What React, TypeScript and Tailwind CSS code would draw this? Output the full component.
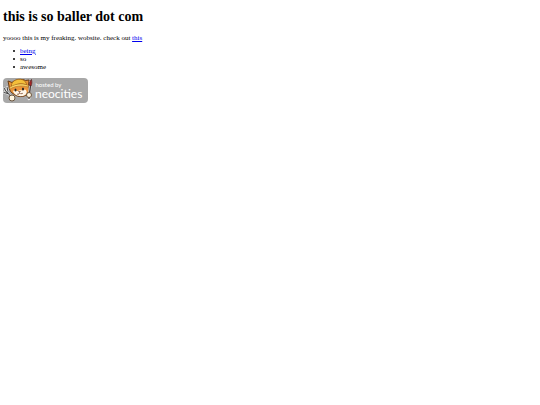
function NeocitiesBadge() {
  return (
    <svg viewBox="0 0 170 50" className="block w-[85px] h-[25px]" role="img" aria-label="hosted by neocities">
      <rect width="170" height="50" rx="8" fill="#a8a8a8" />

      {/* fork */}
      <path d="M2 20l5 8M8 18l2 9M2 29l7 2M9 29l8 10" stroke="#fff" strokeWidth="4" strokeLinecap="round" />
      <path d="M2 20l5 8M8 18l2 9M2 29l7 2M9 29l8 10" stroke="#444" strokeWidth="2.2" strokeLinecap="round" />

      {/* head */}
      <path
        d="M12 16l-2-10 8 3c6-6 20-8 27-4l7-1-1 11c2 7 1 13-3 18-6 5-18 6-25 0-7-3-11-9-11-17z"
        fill="#ea943a"
        stroke="#6b3d16"
        strokeWidth="2"
      />
      <path d="M20 26c5-3 8 2 12-1 4-2 8 1 12-2 5 2 4 9 0 11-8 5-21 2-24-8z" fill="#fff6e8" />
      {/* hard hat */}
      <path d="M17 13C20 4 30 1 38 3c6 2 9 6 9 11-10-4-20-3-30 5z" fill="#f4bf3a" stroke="#9a5f18" strokeWidth="1.5" />
      <path d="M12 20c9-8 26-11 39-5l-1 3c-13-4-26-2-36 4z" fill="#ffdb6b" stroke="#9a5f18" strokeWidth="1" />
      <ellipse cx="25" cy="24" rx="2" ry="3" fill="#242424" />
      <ellipse cx="40" cy="22" rx="2" ry="3" fill="#242424" />
      <path d="M31 27h4l-2 2zM28 32c3 2 4 0 5-2 2 2 5 2 7 0" fill="#713c21" stroke="#713c21" strokeWidth="1" />

      {/* brush */}
      <path d="M55 8l-3 34" stroke="#fff" strokeWidth="5" strokeLinecap="round" />
      <path d="M55 15l-3 26" stroke="#4a4040" strokeWidth="3" strokeLinecap="round" />
      <path d="M53 15c-1-5 1-10 4-12 1 5 1 9-1 13z" fill="#a82424" stroke="#522222" strokeWidth="1.5" />

      {/* paws */}
      <circle cx="18" cy="40" r="6" fill="#fff5df" stroke="#6a5540" strokeWidth="2" />
      <circle cx="52" cy="34" r="5" fill="#fff5df" stroke="#6a5540" strokeWidth="2" />

      <text x="65" y="18" fontSize="12" fill="#fff" className="font-['Lato',sans-serif]">
        hosted by
      </text>
      <text x="64" y="39" fontSize="24" fill="#fff" className="font-['Lato',sans-serif]">
        neocities
      </text>
    </svg>
  )
}

const bullet =
  "flex items-center before:content-[''] before:w-[2px] before:h-[2px] before:mr-[5px] before:rounded-full before:bg-black"

export default function App() {
  return (
    <main className="px-[3px] py-[9px] bg-white text-black text-[7px] leading-[8px] font-['Liberation_Serif',serif]">
      <h1 className="text-[14px] leading-[16px] font-bold">this is so baller dot com</h1>
      <p className="mt-[9px]">
        yoooo this is my freaking. wobsite. check out{' '}
        <a href="#this" className="text-[#0000ee] underline">this</a>
      </p>
      <ul className="mt-[5px] mb-[7px] pl-[10px]">
        <li className={bullet}>
          <a href="#being" className="text-[#0000ee] underline">being</a>
        </li>
        <li className={bullet}>so</li>
        <li className={bullet}>awesome</li>
      </ul>
      <a href="#neocities" className="inline-block">
        <NeocitiesBadge />
      </a>
    </main>
  )
}
